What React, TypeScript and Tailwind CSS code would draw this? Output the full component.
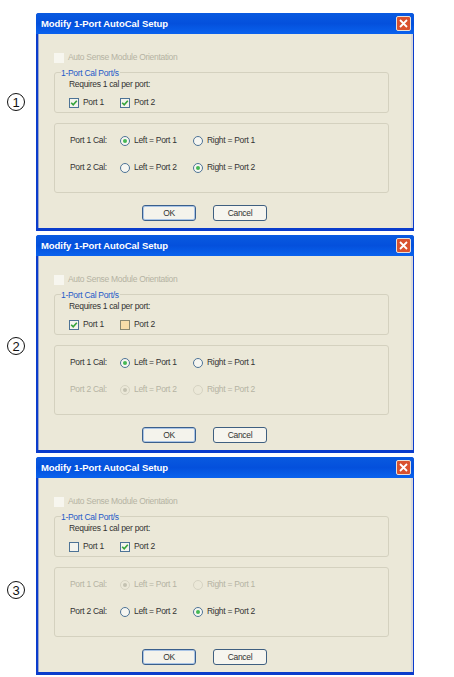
import React from "react";

type CheckState = "checked" | "empty" | "warm";

const Check = ({ state }: { state: CheckState }) => (
  <span
    className={`flex h-[10px] w-[10px] shrink-0 items-center justify-center border ${
      state === "warm" ? "border-[#8a8a70] bg-[#f7dfa8]" : "border-[#4d7396] bg-[#f4f4ee]"
    }`}
  >
    {state === "checked" && (
      <svg width="8" height="8" viewBox="0 0 8 8">
        <path d="M1.2 3.8 L3.2 5.9 L6.8 1.8" fill="none" stroke="#34a33a" strokeWidth="1.6" />
      </svg>
    )}
  </span>
);

const Radio = ({ on, disabled }: { on?: boolean; disabled?: boolean }) => (
  <span
    className={`flex h-[10px] w-[10px] shrink-0 items-center justify-center rounded-full border ${
      disabled ? "border-[#d6d3c2]" : "border-[#4d7396] bg-[#f6f6f1]"
    }`}
  >
    {on && <span className={`h-[4px] w-[4px] rounded-full ${disabled ? "bg-[#c4c2b2]" : "bg-[#45b854]"}`} />}
  </span>
);

const RadioLine = ({ label, on, disabled }: { label: string; on?: boolean; disabled?: boolean }) => (
  <div className={`flex w-[73px] shrink-0 items-center gap-[4px] whitespace-nowrap ${disabled ? "text-[#b5b3a3]" : "text-[#333]"}`}>
    <Radio on={on} disabled={disabled} />
    <span>{label}</span>
  </div>
);

const CalRow = ({ port, selected, disabled }: { port: number; selected: "left" | "right"; disabled?: boolean }) => (
  <div className="flex h-[11px] items-center">
    <span className={`w-[50px] shrink-0 whitespace-nowrap ${disabled ? "text-[#b5b3a3]" : "text-[#333]"}`}>Port {port} Cal:</span>
    <RadioLine label={`Left = Port ${port}`} on={selected === "left"} disabled={disabled} />
    <RadioLine label={`Right = Port ${port}`} on={selected === "right"} disabled={disabled} />
  </div>
);

const PortCheck = ({ label, state }: { label: string; state: CheckState }) => (
  <div className="flex w-[51px] shrink-0 items-center gap-[4px]">
    <Check state={state} />
    <span className="text-[#333]">{label}</span>
  </div>
);

const Dialog = ({
  port1,
  port2,
  cal2Selected,
  cal1Off,
  cal2Off,
}: {
  port1: CheckState;
  port2: CheckState;
  cal2Selected: "left" | "right";
  cal1Off?: boolean;
  cal2Off?: boolean;
}) => (
  <div className="flex h-[218px] w-[378px] flex-col overflow-hidden rounded-t-[3px] bg-[#0a3ccc]">
    <div className="flex h-[21px] shrink-0 items-center justify-between bg-gradient-to-b from-[#0a5ae0] via-[#0450dc] to-[#0a62ee] pl-[5px] pr-[3px]">
      <span className="pt-[1px] text-[9.5px] leading-none font-bold tracking-[-0.05px] whitespace-nowrap text-white">Modify 1-Port AutoCal Setup</span>
      <span className="flex h-[15px] w-[15px] items-center justify-center rounded-[2px] border border-[#e8e0d8] bg-[#d9512e]">
        <svg width="9" height="9" viewBox="0 0 9 9">
          <path d="M1 1 L8 8 M8 1 L1 8" stroke="#fff" strokeWidth="1.8" />
        </svg>
      </span>
    </div>
    <div className="mb-[3px] ml-[2px] mr-[1px] flex min-h-0 flex-1 flex-col border-r-2 border-l border-r-[#d8d8d8] border-l-[#9aa6c8] bg-[#ebe8d8] px-[15px] pt-[18px]">
      <div className="flex h-[11px] items-center gap-[4px] text-[#b5b3a3]">
        <span className="h-[10px] w-[10px] bg-[#f7f6ef]" />
        <span className="whitespace-nowrap">Auto Sense Module Orientation</span>
      </div>
      <div className="relative mt-[9px] h-[41px] w-[335px] shrink-0 rounded-[3px] border border-[#d4d1bf] pl-[14px] pt-[6px]">
        <span className="absolute top-[-5px] left-[6px] bg-[#ebe8d8] pr-[1px] leading-[11px] whitespace-nowrap text-[#2458c8]">1-Port Cal Port/s</span>
        <div className="leading-[11px] whitespace-nowrap text-[#333]">Requires 1 cal per port:</div>
        <div className="mt-[7px] flex h-[11px] items-center">
          <PortCheck label="Port 1" state={port1} />
          <PortCheck label="Port 2" state={port2} />
        </div>
      </div>
      <div className="mt-[10px] flex h-[70px] w-[335px] shrink-0 flex-col gap-[16px] rounded-[3px] border border-[#d4d1bf] pl-[15px] pt-[11px]">
        <CalRow port={1} selected="left" disabled={cal1Off} />
        <CalRow port={2} selected={cal2Selected} disabled={cal2Off} />
      </div>
      <div className="mt-[12px] flex gap-[17px] pl-[88px]">
        <button className="h-[16px] w-[54px] rounded-[3px] border border-[#3a5f8c] bg-[#f4f3ec] text-[#333] shadow-[inset_0_0_0_1px_#a9c4e6]">OK</button>
        <button className="h-[16px] w-[54px] rounded-[3px] border border-[#3f5f80] bg-[#f6f5ef] text-[#333]">Cancel</button>
      </div>
    </div>
  </div>
);

const Row = ({ n, labelPad, children }: { n: number; labelPad: string; children: React.ReactNode }) => (
  <div className="flex items-start">
    <div className={`flex w-[36px] shrink-0 pl-[7px] ${labelPad}`}>
      <span className="flex h-[18px] w-[18px] items-center justify-center rounded-full border border-[#111] text-[13px] leading-none text-[#111]">{n}</span>
    </div>
    {children}
  </div>
);

export default function App() {
  return (
    <div className="flex h-[677px] w-[454px] flex-col gap-[4px] overflow-hidden bg-white pt-[13px] font-['Liberation_Sans',sans-serif] text-[8.5px] tracking-[-0.3px]">
      <Row n={1} labelPad="pt-[80px]">
        <Dialog port1="checked" port2="checked" cal2Selected="right" />
      </Row>
      <Row n={2} labelPad="pt-[102px]">
        <Dialog port1="checked" port2="warm" cal2Selected="left" cal2Off />
      </Row>
      <Row n={3} labelPad="pt-[124px]">
        <Dialog port1="empty" port2="checked" cal2Selected="right" cal1Off />
      </Row>
    </div>
  );
}
